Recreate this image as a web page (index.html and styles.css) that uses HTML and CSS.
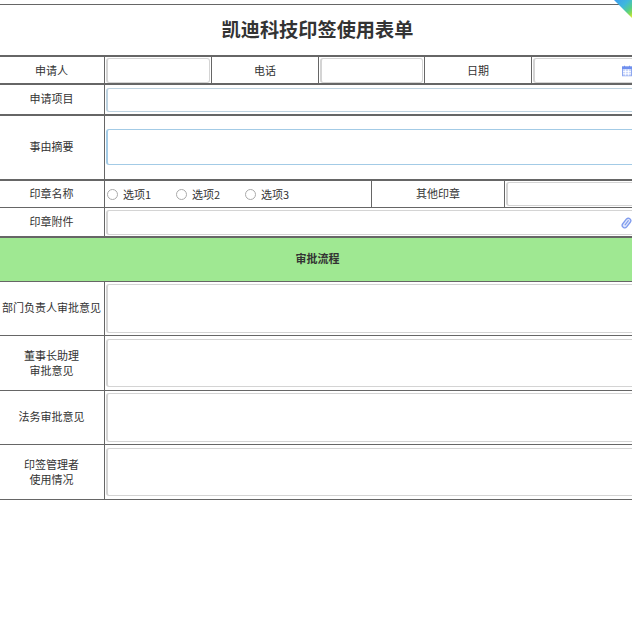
FILE: index.html
```html
<!DOCTYPE html>
<html lang="zh-CN">
<head>
    <meta charset="UTF-8">
    <meta name="viewport" content="width=device-width, initial-scale=1.0">
    <title>凯迪科技印签使用表单</title>
    <link rel="stylesheet" href="styles.css">
</head>
<body>
    <div class="corner-ribbon"></div>

    <table class="seal-form">
        <colgroup>
            <col class="col-label">
            <col class="col-a">
            <col class="col-a">
            <col class="col-half">
            <col class="col-half">
            <col class="col-b">
            <col class="col-c">
            <col class="col-last">
        </colgroup>
        <tr class="row-title">
            <td colspan="8"><h1 class="form-title">凯迪科技印签使用表单</h1></td>
        </tr>
        <tr class="row-base">
            <td class="label label-first">申请人</td>
            <td class="field"><input class="input" type="text"></td>
            <td class="label">电话</td>
            <td class="field" colspan="2"><input class="input" type="text"></td>
            <td class="label" colspan="2">日期</td>
            <td class="field">
                <div class="input-wrap">
                    <input class="input" type="text">
                    <svg class="input-icon icon-calendar" viewBox="0 0 10 11" width="10" height="11">
                        <rect x="0.5" y="1.5" width="9" height="9" fill="#c9d6fb" stroke="#8fa8ef"/>
                        <rect x="0" y="1" width="10" height="2.5" fill="#6f8fee"/>
                        <path d="M2.5 0v2M7.5 0v2" stroke="#6f8fee"/>
                        <path d="M3.5 4v6M6.5 4v6M1 6h8M1 8.2h8" stroke="#fff" stroke-width="0.8"/>
                    </svg>
                </div>
            </td>
        </tr>
        <tr class="row-project">
            <td class="label label-first label-up">申请项目</td>
            <td class="field" colspan="7"><input class="input input-focus" type="text"></td>
        </tr>
        <tr class="row-summary">
            <td class="label label-first label-up-more">事由摘要</td>
            <td class="field" colspan="7"><textarea class="input input-blue input-summary"></textarea></td>
        </tr>
        <tr class="row-seal">
            <td class="label label-first label-up-less">印章名称</td>
            <td class="field" colspan="3">
                <div class="radio-group">
                    <label class="radio"><input type="radio" name="seal"><span>选项1</span></label>
                    <label class="radio"><input type="radio" name="seal"><span>选项2</span></label>
                    <label class="radio"><input type="radio" name="seal"><span>选项3</span></label>
                </div>
            </td>
            <td class="label label-up-less" colspan="2">其他印章</td>
            <td class="field" colspan="2"><input class="input input-other" type="text"></td>
        </tr>
        <tr class="row-attach">
            <td class="label label-first label-up">印章附件</td>
            <td class="field" colspan="7">
                <div class="input-wrap">
                    <input class="input" type="text">
                    <svg class="input-icon icon-clip" viewBox="0 0 11 12" width="11" height="12">
                        <g transform="rotate(38 5.5 6)">
                            <rect x="3" y="0.6" width="5" height="10.8" rx="2.5" fill="#dfe6fb" stroke="#7f9bee" stroke-width="1.3"/>
                            <path d="M5.5 2.6v6" stroke="#7f9bee" stroke-width="1.1"/>
                        </g>
                    </svg>
                </div>
            </td>
        </tr>
        <tr class="row-section">
            <td class="section-title" colspan="8">审批流程</td>
        </tr>
        <tr class="row-opinion-a">
            <td class="label label-first label-up">部门负责人审批意见</td>
            <td class="field" colspan="7"><textarea class="input input-opinion opinion-tall"></textarea></td>
        </tr>
        <tr class="row-opinion-b">
            <td class="label label-first">董事长助理<br>审批意见</td>
            <td class="field" colspan="7"><textarea class="input input-opinion opinion-short"></textarea></td>
        </tr>
        <tr class="row-opinion-a">
            <td class="label label-first label-up">法务审批意见</td>
            <td class="field" colspan="7"><textarea class="input input-opinion opinion-tall"></textarea></td>
        </tr>
        <tr class="row-opinion-b">
            <td class="label label-first">印签管理者<br>使用情况</td>
            <td class="field" colspan="7"><textarea class="input input-opinion opinion-short"></textarea></td>
        </tr>
    </table>
</body>
</html>
```

FILE: styles.css
```css
html {
    overflow: hidden;
}

body {
    font-family: "Noto Sans CJK SC", "Liberation Sans", sans-serif;
    font-size: 11px;
    color: #333;
    margin: 0;
    padding: 4px 0 0;
    background: #fff;
}

.corner-ribbon {
    position: absolute;
    top: 0;
    right: 0;
    width: 18px;
    height: 18px;
    background: linear-gradient(135deg, #3a9cf0 0%, #3fb8dc 42%, #55cf8a 68%, #8edc4e 84%, #f2ef38 100%);
    clip-path: polygon(0 0, 100% 0, 100% 100%);
}

.seal-form {
    table-layout: fixed;
    width: 642px;
    border-collapse: separate;
    border-spacing: 0;
    border-top: 1px solid #666;
}

.seal-form td {
    box-sizing: border-box;
    padding: 0;
    border-bottom: 1px solid #666;
    border-right: 1px solid #666;
    text-align: center;
    vertical-align: middle;
}

.col-label { width: 105px; }
.col-a { width: 107px; }
.col-half { width: 53px; }
.col-b { width: 80px; }
.col-c { width: 27px; }
.col-last { width: 110px; }

.row-title td { height: 52px; border-bottom-width: 2px; }
.row-base td { height: 28px; border-bottom-width: 2px; }
.row-project td { height: 31px; border-bottom-width: 2px; }
.row-summary td { height: 65px; border-bottom-width: 2px; }
.row-seal td { height: 27px; }
.row-attach td { height: 30px; border-bottom-width: 2px; }
.row-section td { height: 44px; }
.row-opinion-a td { height: 54px; }
.row-opinion-b td { height: 55px; }

.seal-form .row-title td {
    padding-right: 6px;
}

.form-title {
    margin: 0;
    font-size: 19.2px;
    font-weight: 700;
    line-height: 1.2;
    color: #333;
}

.label {
    line-height: 15px;
}

.seal-form .label-first {
    padding-right: 1px;
}

.seal-form .label-up {
    padding-bottom: 2px;
}

.seal-form .label-up-more {
    padding-bottom: 3px;
}

.seal-form .label-up-less {
    padding-bottom: 1px;
}

.seal-form .field {
    padding: 0 1px;
    text-align: left;
}

.input-wrap {
    position: relative;
}

.input {
    display: block;
    box-sizing: border-box;
    width: 100%;
    height: 25px;
    margin: 0;
    padding: 0 6px;
    border: 1px solid #d4d4d4;
    border-left-width: 2px;
    border-radius: 3px;
    background: #fff;
    outline: none;
    resize: none;
}

.input-focus {
    height: 24px;
    border-color: #bdd2e0;
}

.input-blue {
    border-color: #a3cbe6;
}

.input-summary {
    height: 36px;
    margin-bottom: 2px;
}

.input-other {
    height: 24px;
}

.input-opinion.opinion-tall {
    height: 49px;
}

.input-opinion.opinion-short {
    height: 48px;
}

.input-icon {
    position: absolute;
    top: 50%;
    transform: translateY(-50%);
}

.icon-calendar {
    right: 8px;
    margin-top: 1px;
}

.icon-clip {
    right: 8px;
    margin-top: 1px;
}

.radio-group {
    display: flex;
    padding-left: 1px;
}

.radio {
    display: flex;
    align-items: center;
    width: 69px;
}

.radio input {
    appearance: none;
    box-sizing: border-box;
    width: 11px;
    height: 11px;
    margin: 0 5px 0 0;
    border: 1px solid #aaa;
    border-radius: 50%;
    background: #fff;
}

.section-title {
    background: #9fe892;
    font-weight: 700;
    padding-right: 6px !important;
    padding-bottom: 3px !important;
}
```
